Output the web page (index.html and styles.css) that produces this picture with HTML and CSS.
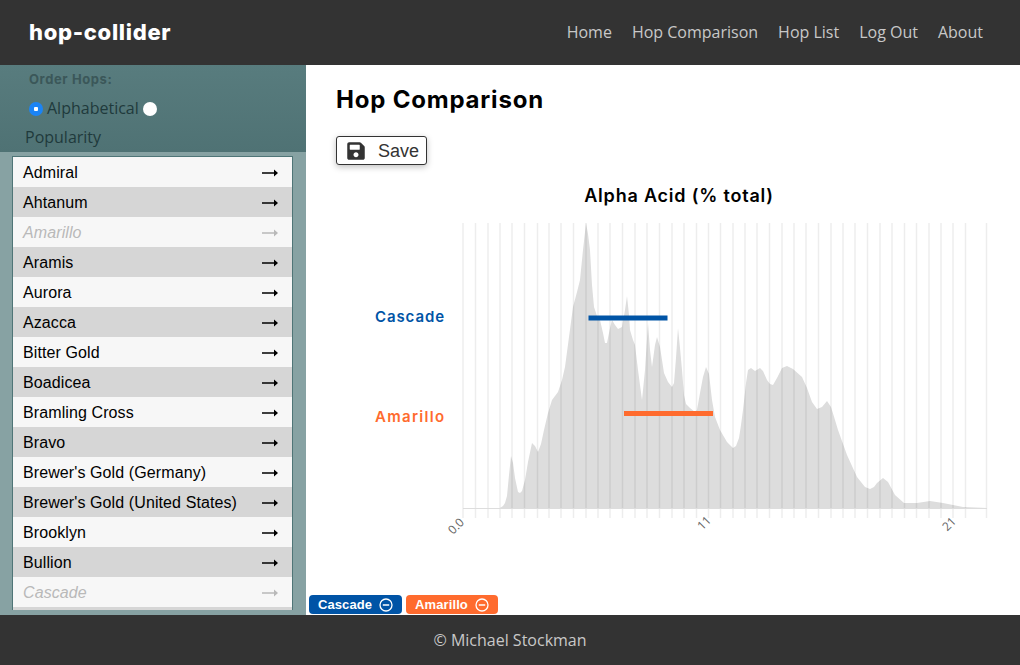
FILE: index.html
```html
<!DOCTYPE html>
<html lang="en">
  <head>
    <meta charset="UTF-8" />
    <title>hop-collider</title>
    <link rel="stylesheet" href="styles.css">
  </head>
  <body>
    <svg class="defs" width="0" height="0">
      <symbol id="arrow" viewBox="0 0 16 8">
        <path d="M0 3.2h12V0.6L16 4l-4 3.4V4.8H0z" fill="currentColor" />
      </symbol>
      <symbol id="minus" viewBox="0 0 14 14">
        <circle cx="7" cy="7" r="6" fill="none" stroke="currentColor" stroke-width="1.3" />
        <path d="M3.8 7h6.4" stroke="currentColor" stroke-width="1.5" />
      </symbol>
    </svg>

    <div class="navbar">
      <div class="brand">hop-collider</div>
      <div class="nav-links">
        <a>Home</a>
        <a>Hop Comparison</a>
        <a>Hop List</a>
        <a>Log Out</a>
        <a>About</a>
      </div>
    </div>

    <div class="content">
      <div class="sidebar">
        <div class="order-box">
          <div class="order-title">Order Hops:</div>
          <div class="order-options">
            <input type="radio" name="order" checked /><span>Alphabetical</span>
            <input type="radio" name="order" /><br />
            <span>Popularity</span>
          </div>
        </div>
        <div class="hop-list">
          <div class="hop-row"><span>Admiral</span><svg class="arrow"><use href="#arrow" /></svg></div>
          <div class="hop-row"><span>Ahtanum</span><svg class="arrow"><use href="#arrow" /></svg></div>
          <div class="hop-row picked"><span>Amarillo</span><svg class="arrow"><use href="#arrow" /></svg></div>
          <div class="hop-row"><span>Aramis</span><svg class="arrow"><use href="#arrow" /></svg></div>
          <div class="hop-row"><span>Aurora</span><svg class="arrow"><use href="#arrow" /></svg></div>
          <div class="hop-row"><span>Azacca</span><svg class="arrow"><use href="#arrow" /></svg></div>
          <div class="hop-row"><span>Bitter Gold</span><svg class="arrow"><use href="#arrow" /></svg></div>
          <div class="hop-row"><span>Boadicea</span><svg class="arrow"><use href="#arrow" /></svg></div>
          <div class="hop-row"><span>Bramling Cross</span><svg class="arrow"><use href="#arrow" /></svg></div>
          <div class="hop-row"><span>Bravo</span><svg class="arrow"><use href="#arrow" /></svg></div>
          <div class="hop-row"><span>Brewer's Gold (Germany)</span><svg class="arrow"><use href="#arrow" /></svg></div>
          <div class="hop-row"><span>Brewer's Gold (United States)</span><svg class="arrow"><use href="#arrow" /></svg></div>
          <div class="hop-row"><span>Brooklyn</span><svg class="arrow"><use href="#arrow" /></svg></div>
          <div class="hop-row"><span>Bullion</span><svg class="arrow"><use href="#arrow" /></svg></div>
          <div class="hop-row picked"><span>Cascade</span><svg class="arrow"><use href="#arrow" /></svg></div>
          <div class="hop-row"></div>
        </div>
      </div>

      <div class="main">
        <h1 class="page-title">Hop Comparison</h1>
        <button class="save-btn">
          <svg class="save-icon" viewBox="0 0 448 512">
            <path d="M433.941 129.941l-83.882-83.882A48 48 0 0 0 316.118 32H48C21.49 32 0 53.49 0 80v352c0 26.51 21.49 48 48 48h352c26.51 0 48-21.49 48-48V163.882a48 48 0 0 0-14.059-33.941zM224 416c-35.346 0-64-28.654-64-64 0-35.346 28.654-64 64-64s64 28.654 64 64c0 35.346-28.654 64-64 64zm96-304.52V212c0 6.627-5.373 12-12 12H76c-6.627 0-12-5.373-12-12V108c0-6.627 5.373-12 12-12h228.52c3.183 0 6.235 1.264 8.485 3.515l3.48 3.48A11.996 11.996 0 0 1 320 111.48z" />
          </svg>
          <span class="save-text">Save</span>
        </button>

        <!-- viewBox uses page coordinates so the numbers read straight off the screenshot -->
        <svg class="chart" viewBox="306 180 714 410">
          <text class="chart-title" x="679" y="202">Alpha Acid (% total)</text>

          <path class="density" d="M463 508L500 508L503 506L505 503L507 496L509 475L511 456L513 463L515 478L518 492L520 493L522 491L525 480L528 462L532 443L535 446L538 452L541 444L544 430L548 413L552 400L558 392L562 380L565 367L569 337L573 307L577 292L580 280L583 250L586 223L588 234L590 250L592 285L594 307L597 316L600 320L603 333L605 343L607 343L610 328L612 320L615 325L618 329L622 327L625 310L627 296L629 315L630 330L633 340L635 345L638 370L642 400L645 370L648 323L650 350L652 367L655 345L657 337L660 347L662 360L664 373L668 382L672 387L674 383L676 358L678 328L680 348L682 370L684 395L686 404L690 408L695 412L697 410L700 393L703 377L706 367L709 374L712 400L715 417L720 430L727 442L733 448L736 446L739 438L741 425L743 410L746 383L748 370L751 368L755 371L760 368L763 371L767 380L770 384L773 385L777 378L782 368L787 366L793 369L802 377L807 388L812 402L817 409L822 407L827 401L831 407L835 420L838 430L847 455L857 477L865 487L870 489L874 487L877 483L883 478L888 482L895 495L904 503L917 503L930 501L943 503L953 505L963 507L987 508Z" />

          <path class="grid" d="M463 223V518M475.500 223V518M488 223V518M500 223V518M512 223V518M524.500 223V518M537.500 223V518M549 223V518M561 223V518M573.500 223V518M586 223V518M598 223V518M610 223V518M622.500 223V518M635 223V518M647 223V518M659.500 223V518M672 223V518M684 223V518M696.500 223V518M708.500 223V518M720.500 223V518M733 223V518M745 223V518M757 223V518M769.500 223V518M782 223V518M794 223V518M806 223V518M818.500 223V518M831 223V518M843 223V518M855 223V518M867.500 223V518M880 223V518M892 223V518M904.500 223V518M916.500 223V518M929 223V518M941 223V518M953 223V518M965.500 223V518M986.500 223V518" />
          <path class="axis" d="M463 508.500H987" />

          <text class="hop-label cascade-text" x="375" y="322">Cascade</text>
          <text class="hop-label amarillo-text" x="375" y="422">Amarillo</text>
          <rect class="cascade-fill" x="588.500" y="315.500" width="79" height="5" />
          <rect class="amarillo-fill" x="624" y="411" width="89" height="5" />

          <text class="tick" transform="translate(459 529) rotate(-45)">0.0</text>
          <text class="tick" transform="translate(707 526) rotate(-45)">11</text>
          <text class="tick" transform="translate(952 527) rotate(-45)">21</text>
        </svg>

        <div class="tags">
          <div class="tag cascade-fill">Cascade <svg class="tag-icon"><use href="#minus" /></svg></div>
          <div class="tag amarillo-fill">Amarillo <svg class="tag-icon"><use href="#minus" /></svg></div>
        </div>
      </div>
    </div>

    <div class="footer">© Michael Stockman</div>
  </body>
</html>
```

FILE: styles.css
```css
html,
body {
  height: 100%;
}
body {
  margin: 0;
  display: flex;
  flex-direction: column;
  overflow: hidden;
  background-color: #fff;
  font-family: "Open Sans", sans-serif;
}
.defs {
  position: absolute;
}
.navbar {
  flex: 0 0 65px;
  box-sizing: border-box;
  display: flex;
  justify-content: space-between;
  align-items: center;
  padding: 0 37px 2px 29px;
  background-color: #333;
}
.brand {
  font-family: "Inter", sans-serif;
  font-weight: 800;
  font-size: 22px;
  letter-spacing: 0.7px;
  color: #fff;
}
.nav-links {
  display: flex;
  gap: 20px;
  font-size: 16px;
  color: #c8c8c8;
}
.content {
  flex: 1;
  min-height: 0;
  display: flex;
}
.sidebar {
  flex: 0 0 306px;
  display: flex;
  flex-direction: column;
  background-color: #87a2a3;
}
.order-box {
  flex: 0 0 87px;
  box-sizing: border-box;
  padding: 6px 0 0 25px;
  background: linear-gradient(#587c7e, #4f7274);
  color: #1f3a3c;
}
.order-title {
  margin-left: 4px;
  font-family: "Inter", sans-serif;
  font-weight: 700;
  font-size: 13px;
  line-height: 16px;
  letter-spacing: 0.6px;
  color: #3b5759;
}
.order-options {
  margin-top: 7px;
  font-size: 16px;
  line-height: 29px;
}
.order-options input {
  appearance: none;
  width: 14px;
  height: 14px;
  margin: 0 4px 0 4px;
  vertical-align: -2px;
  border-radius: 50%;
  background-color: #fff;
}
.order-options span + input {
  margin-left: 0;
}
.order-options input:checked {
  background: radial-gradient(circle, #fff 0 2px, #1b84f5 2.5px);
}
.hop-list {
  height: 453px;
  margin: 4px 0 0 12px;
  border: 1px solid #4f7577;
  border-bottom: 0;
  width: 279px;
  overflow: hidden;
}
.hop-row {
  box-sizing: border-box;
  height: 30px;
  display: flex;
  justify-content: space-between;
  align-items: center;
  padding: 2px 14px 0 10px;
  background-color: #f7f7f7;
  font-family: "Liberation Sans", sans-serif;
  font-size: 16px;
  letter-spacing: 0.1px;
  color: #000;
}
.hop-row:nth-child(even) {
  background-color: #d6d6d6;
}
.hop-row.picked {
  color: #b9b9b9;
  font-style: italic;
}
.arrow {
  width: 16px;
  height: 8px;
}
.main {
  flex: 1;
  min-width: 0;
  display: flex;
  flex-direction: column;
  align-items: flex-start;
  padding-left: 3px;
}
.page-title {
  margin: 20px 0 0 27px;
  font-family: "Inter", sans-serif;
  font-weight: 700;
  font-size: 24px;
  line-height: 30px;
  letter-spacing: 0.8px;
  color: #000;
}
.save-btn {
  display: flex;
  align-items: center;
  gap: 13px;
  box-sizing: border-box;
  width: 91px;
  height: 29px;
  margin: 21px 0 0 27px;
  padding: 0 0 0 10px;
  border: 1px solid #333;
  border-radius: 3px;
  background-color: #fff;
  box-shadow: 0 2px 6px rgba(0, 0, 0, 0.25);
  font-family: "Liberation Sans", sans-serif;
  font-size: 18px;
  color: #333;
}
.save-text {
  padding-top: 2px;
}
.save-icon {
  width: 18px;
  height: 20px;
  fill: #333;
}
.chart {
  display: block;
  width: 714px;
  height: 410px;
  margin: 15px 0 0 -3px;
}
.chart-title {
  font-family: "Inter", sans-serif;
  font-weight: 600;
  font-size: 18px;
  letter-spacing: 0.8px;
  text-anchor: middle;
  fill: #000;
}
.density {
  fill: #ddd;
}
.grid {
  fill: none;
  stroke: rgba(0, 0, 0, 0.07);
  stroke-width: 1.5;
}
.axis {
  fill: none;
  stroke: #ddd;
  stroke-width: 1;
}
.hop-label {
  font-family: "Inter", sans-serif;
  font-weight: 600;
  font-size: 15px;
  letter-spacing: 0.9px;
}
.tick {
  font-family: "Open Sans", sans-serif;
  font-size: 12px;
  text-anchor: middle;
  fill: #666;
}
.cascade-text {
  fill: #0054a6;
}
.amarillo-text {
  fill: #ff6b2e;
  letter-spacing: 1.3px;
}
rect.cascade-fill {
  fill: #0054a6;
}
rect.amarillo-fill {
  fill: #ff6b2e;
}
.tags {
  display: flex;
  gap: 4px;
  margin-top: auto;
  margin-bottom: 1px;
}
.tag {
  display: flex;
  align-items: center;
  justify-content: center;
  gap: 7px;
  width: 93px;
  height: 19px;
  border-radius: 4px;
  font-family: "Liberation Sans", sans-serif;
  font-weight: 700;
  font-size: 13px;
  letter-spacing: 0.1px;
  color: #fff;
}
.tag + .tag {
  width: 92px;
}
.tag-icon {
  width: 14px;
  height: 14px;
}
div.cascade-fill {
  background-color: #0054a6;
}
div.amarillo-fill {
  background-color: #ff6b2e;
}
.footer {
  flex: 0 0 50px;
  display: flex;
  justify-content: center;
  align-items: center;
  background-color: #333;
  font-size: 16px;
  color: #c8c8c8;
}
```
